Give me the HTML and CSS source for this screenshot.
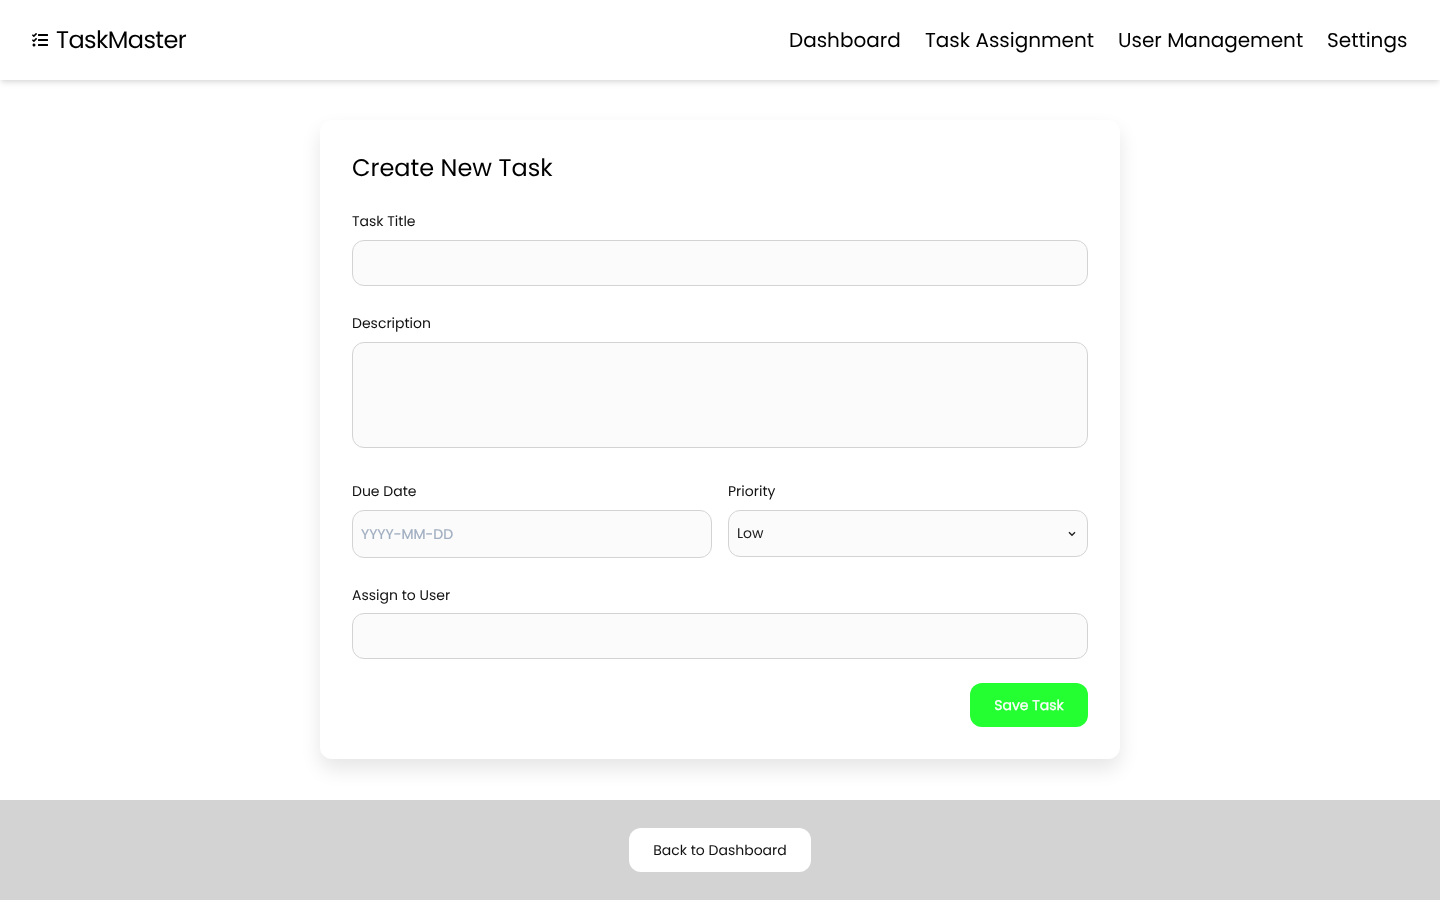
FILE: index.html
```html
<!DOCTYPE html>
<html lang="en">
<head>
<meta charset="utf-8">
<title>TaskMaster</title>
<link rel="stylesheet" href="styles.css">
</head>
<body>
<header class="header">
  <a class="brand">
    <svg class="brand-icon" viewBox="0 0 512 512" fill="currentColor"><path d="M139.61 35.5a12 12 0 0 0-17 0L58.93 98.81l-22.7-22.12a12 12 0 0 0-17 0L3.53 92.41a12 12 0 0 0 0 17l47.59 47.4a12.78 12.78 0 0 0 17.61 0l15.59-15.62L156.52 69a12.09 12.09 0 0 0 .09-17zm0 159.19a12 12 0 0 0-17 0l-63.68 63.72-22.7-22.1a12 12 0 0 0-17 0L3.53 252a12 12 0 0 0 0 17L51 316.5a12.77 12.77 0 0 0 17.6 0l15.7-15.69 72.2-72.22a12 12 0 0 0 .09-16.9zM64 368c-26.49 0-48.59 21.5-48.59 48S37.53 464 64 464a48 48 0 0 0 0-96zm432 16H208a16 16 0 0 0-16 16v32a16 16 0 0 0 16 16h288a16 16 0 0 0 16-16v-32a16 16 0 0 0-16-16zm0-320H208a16 16 0 0 0-16 16v32a16 16 0 0 0 16 16h288a16 16 0 0 0 16-16V80a16 16 0 0 0-16-16zm0 160H208a16 16 0 0 0-16 16v32a16 16 0 0 0 16 16h288a16 16 0 0 0 16-16v-32a16 16 0 0 0-16-16z"/></svg>
    <span class="brand-name">TaskMaster</span>
  </a>
  <nav class="nav">
    <a class="nav-link">Dashboard</a>
    <a class="nav-link">Task Assignment</a>
    <a class="nav-link">User Management</a>
    <a class="nav-link">Settings</a>
  </nav>
</header>
<main class="main">
  <form class="card">
    <h1 class="title">Create New Task</h1>
    <div class="field">
      <label class="label" for="title">Task Title</label>
      <input class="control" id="title" type="text">
    </div>
    <div class="field field-description">
      <label class="label" for="description">Description</label>
      <textarea class="control control-area" id="description"></textarea>
    </div>
    <div class="row">
      <div class="field">
        <label class="label" for="due">Due Date</label>
        <input class="control control-date" id="due" type="text" placeholder="YYYY-MM-DD">
      </div>
      <div class="field">
        <label class="label" for="priority">Priority</label>
        <div class="control control-select" id="priority">
          <span>Low</span>
          <svg class="chevron" viewBox="0 0 8 6" fill="none" stroke="currentColor" stroke-width="1.4"><path d="M1 1.2 4 4.2 7 1.2"/></svg>
        </div>
      </div>
    </div>
    <div class="field field-user">
      <label class="label" for="user">Assign to User</label>
      <input class="control" id="user" type="text">
    </div>
    <button class="button save" type="button">Save Task</button>
  </form>
</main>
<footer class="footer">
  <button class="button back" type="button">Back to Dashboard</button>
</footer>
</body>
</html>
```
FILE: styles.css
```css
* { box-sizing: border-box; }
body {
  margin: 0;
  height: 900px;
  display: flex;
  flex-direction: column;
  background: #fff;
  color: #000;
  font-family: Poppins, Inter, "Open Sans", sans-serif;
  text-rendering: geometricPrecision;
  overflow: hidden;
}
.header {
  height: 80px;
  flex: none;
  padding: 0 32px;
  display: flex;
  align-items: center;
  justify-content: space-between;
  background: #fff;
  box-shadow: 0 4px 6px -1px rgba(0,0,0,.1), 0 2px 4px -1px rgba(0,0,0,.06);
}
.brand { display: flex; align-items: center; gap: 8px; }
.brand-icon { width: 16px; height: 16px; }
.brand-name { padding-top: 2px; font-size: 24px; line-height: 32px; letter-spacing: -.6px; }
.nav { display: flex; gap: 24px; margin-right: .6px; }
.nav-link { font-size: 20px; line-height: 28px; white-space: nowrap; }
.brand-name, .nav-link, .title, .label, .control, .button { will-change: transform; }
.main { flex: 1; padding-top: 40px; }
.card {
  width: 800px;
  height: 639px;
  margin: 0 auto;
  padding: 32px;
  display: flex;
  flex-direction: column;
  border-radius: 12px;
  background: #fff;
  box-shadow: 0 10px 20px rgba(0,0,0,.1);
}
.title { margin: 1px 0 23px; font-size: 24px; line-height: 32px; font-weight: 400; }
.field { display: flex; flex-direction: column; margin-bottom: 26px; }
.label { height: 20px; margin: 3px 0 9px; font-size: 14px; line-height: 20px; color: #111; }
.control {
  width: 100%;
  height: 46px;
  padding: 8px;
  border: 1px solid #d3d3d3;
  border-radius: 12px;
  background: #fbfbfb;
  color: #222;
  font: 14px/20px Poppins, Inter, "Open Sans", sans-serif;
  text-rendering: inherit;
  outline: none;
}
.field-description { margin-bottom: 32px; }
.field-description .label { margin-top: 1px; }
.control-area { height: 106px; resize: none; display: block; }
.row { display: grid; grid-template-columns: 1fr 1fr; gap: 16px; }
.row .label { margin-top: 1px; }
.row .field { margin-bottom: 26px; }
.control-date { height: 48px; }
.control-date::placeholder { color: #a0aec0; opacity: 1; -webkit-text-stroke: .2px #a0aec0; }
.control-select { height: 47px; display: flex; align-items: center; justify-content: space-between; padding: 7px 11px 8px 8px; }
.chevron { width: 8px; height: 6px; margin-top: 2px; }
.field-user { margin-bottom: 24px; }
.field-user .label { margin: 1px 0 8px; }
.button {
  height: 44px;
  border: 0;
  border-radius: 12px;
  padding: 0;
  font: 14px/20px Poppins, Inter, "Open Sans", sans-serif;
  text-rendering: inherit;
}
.save { width: 118px; align-self: flex-end; background: #24ff32; color: #fff; -webkit-text-stroke: .3px #fff; }
.footer { height: 100px; flex: none; display: flex; align-items: center; justify-content: center; background: #d3d3d3; }
.back { width: 182px; background: #fff; color: #111; }
```
